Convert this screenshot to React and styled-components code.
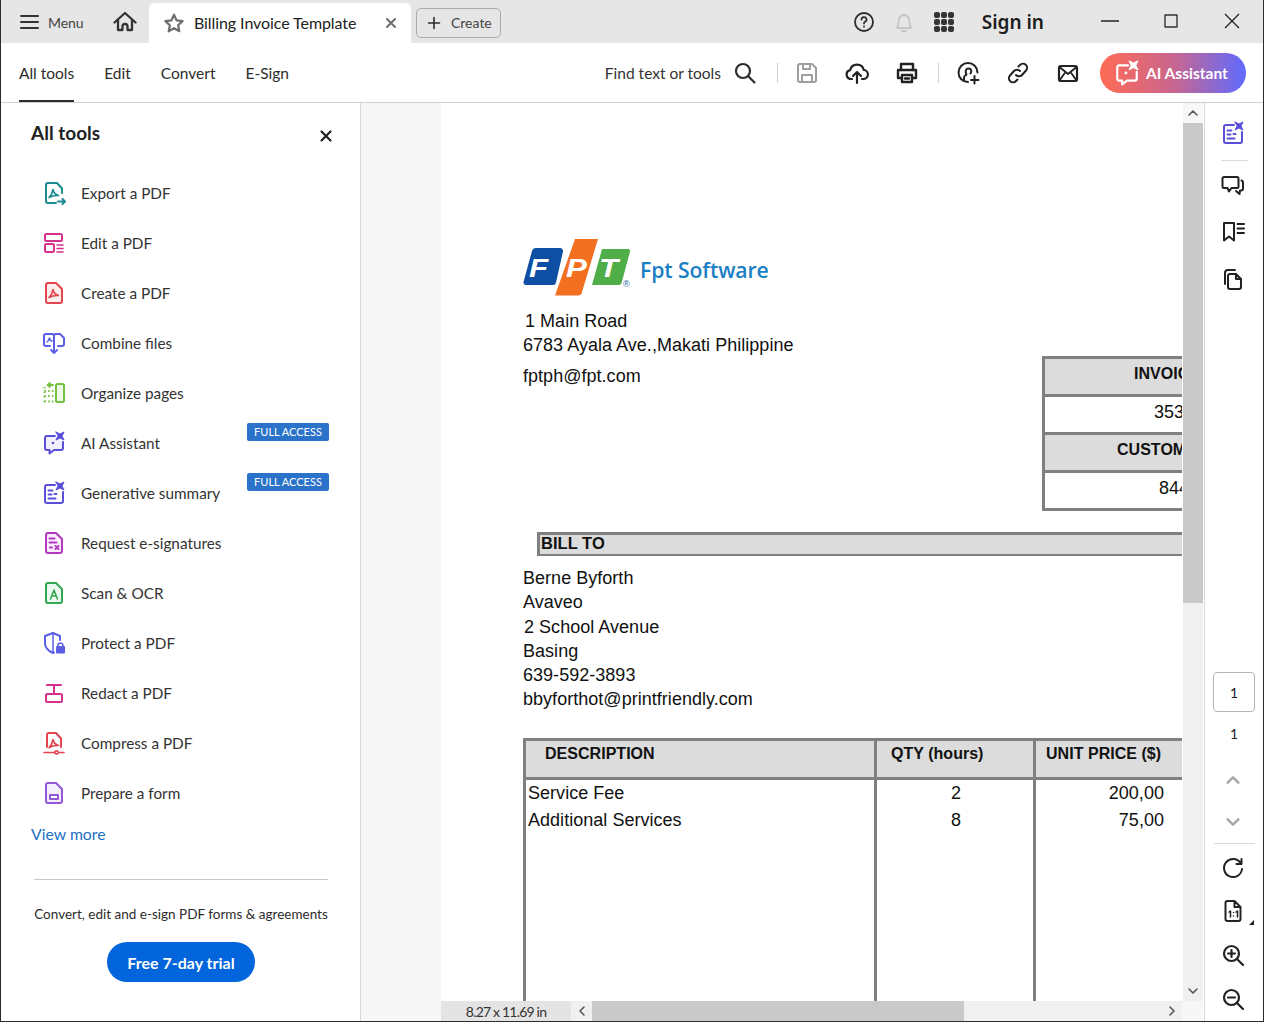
import React from 'react';
import styled, { createGlobalStyle } from 'styled-components';

const GlobalStyle = createGlobalStyle`
  html, body {
    margin: 0;
    padding: 0;
    background: #fff;
  }
  * {
    box-sizing: border-box;
  }
`;

const UI_FONT = `'Lato', 'Noto Sans', sans-serif`;
const DOC_FONT = `'Liberation Sans', Arial, sans-serif`;

const Window = styled.div`
  width: 1264px;
  height: 1022px;
  display: flex;
  flex-direction: column;
  overflow: hidden;
  border-left: 1px solid #2c2c2c;
  border-right: 1px solid #2c2c2c;
  border-bottom: 1px solid #2c2c2c;
  font-family: ${UI_FONT};
  color: #2c2c2c;
  background: #fff;
`;

const TitleBar = styled.div`
  height: 43px;
  flex: none;
  display: flex;
  align-items: flex-end;
  background: #e6e6e6;
`;

const MenuButton = styled.div`
  width: 112px;
  height: 43px;
  display: flex;
  align-items: center;
  gap: 8px;
  padding: 1px 0 0 19px;
  font-size: 14px;
  letter-spacing: -0.1px;
  color: #444;
`;

const HomeButton = styled.div`
  width: 36px;
  height: 43px;
  display: flex;
  align-items: center;
`;

const Tab = styled.div`
  width: 262px;
  height: 40px;
  display: flex;
  align-items: center;
  padding: 0 14px 0 14px;
  background: #fff;
  border-radius: 5px 5px 0 0;
  font-size: 16px;
  letter-spacing: -0.08px;
  color: #222;
`;

const TabTitle = styled.span`
  margin: -2px 0 0 9px;
  flex: 1;
  white-space: nowrap;
`;

const CreateButton = styled.div`
  width: 85px;
  height: 30px;
  margin: 0 0 5px 5px;
  display: flex;
  align-items: center;
  gap: 10px;
  padding: 0 0 1px 10px;
  border: 1px solid #ababab;
  border-radius: 5px;
  font-size: 14px;
  color: #444;
`;

const TitleActions = styled.div`
  margin-left: auto;
  height: 43px;
  display: flex;
  align-items: center;
  padding-right: 1px;
`;

const TitleIcon = styled.div`
  width: 40px;
  display: flex;
  justify-content: center;
`;

const SignIn = styled.div`
  margin: 0 35px 0 18px;
  padding-top: 1px;
  font-family: 'Noto Sans', sans-serif;
  font-size: 19px;
  font-weight: 600;
  color: #1c1c1c;
  white-space: nowrap;
`;

const WindowButton = styled.div`
  width: 61px;
  height: 30px;
  margin-bottom: 1px;
  display: flex;
  align-items: center;
  justify-content: center;
`;

const ToolBar = styled.div`
  height: 60px;
  flex: none;
  display: flex;
  align-items: center;
  border-bottom: 1px solid #d0d0d0;
  padding-left: 18px;
`;

const NavTab = styled.div`
  height: 59px;
  margin-right: 30px;
  display: flex;
  align-items: center;
  font-size: 15.5px;
  color: #2c2c2c;
  border-bottom: 2px solid ${p => (p.$active ? '#2c2c2c' : 'transparent')};
  padding-top: 2px;
`;

const ToolActions = styled.div`
  margin-left: auto;
  display: flex;
  align-items: center;
  padding-right: 17px;
`;

const FindLabel = styled.span`
  font-size: 15.5px;
  color: #333;
  margin-right: 12px;
`;

const ToolDivider = styled.div`
  width: 1px;
  height: 20px;
  margin: 0 ${p => p.$right || 17}px 0 ${p => p.$left || 18}px;
  background: #cfcfcf;
`;

const ToolIcon = styled.div`
  width: ${p => p.$width || 50}px;
  display: flex;
  justify-content: center;
`;

const AssistantButton = styled.div`
  width: 146px;
  height: 40px;
  margin-left: 7px;
  display: flex;
  align-items: center;
  gap: 6px;
  padding-left: 14px;
  border-radius: 20px;
  background: linear-gradient(90deg, #ff6b55 0%, #c9668e 50%, #5f6bff 100%);
  color: #fff;
  font-size: 15.5px;
  font-weight: 700;
  white-space: nowrap;
`;

const Body = styled.div`
  flex: 1;
  min-height: 0;
  display: flex;
`;

const Sidebar = styled.aside`
  width: 360px;
  flex: none;
  display: flex;
  flex-direction: column;
  border-right: 1px solid #d8d8d8;
`;

const SidebarHead = styled.div`
  height: 65px;
  display: flex;
  justify-content: space-between;
  padding: 18px 26px 0 30px;
  font-size: 19px;
  font-weight: 700;
  color: #222;
`;

const ToolList = styled.div`
  display: flex;
  flex-direction: column;
`;

const ToolRow = styled.div`
  height: 50px;
  display: flex;
  align-items: center;
  padding: 0 31px 0 41px;
  font-size: 15.3px;
  color: #333;
`;

const RowLabel = styled.span`
  margin-left: 15px;
  white-space: nowrap;
`;

const Badge = styled.span`
  margin: 5px 0 0 auto;
  align-self: flex-start;
  width: 82px;
  height: 18px;
  padding-bottom: 1px;
  display: flex;
  align-items: center;
  justify-content: center;
  border-radius: 2px;
  background: #2b73ca;
  color: #fff;
  font-size: 11px;
`;

const ViewMore = styled.a`
  margin: 6px 0 0 30px;
  font-size: 15.8px;
  color: #1b6ec2;
`;

const Promo = styled.div`
  margin: 36px 32px 0 33px;
  padding-top: 26px;
  display: flex;
  flex-direction: column;
  align-items: center;
  border-top: 1px solid #c8c8c8;
  font-size: 13.5px;
  color: #2c2c2c;
  white-space: nowrap;
`;

const TrialButton = styled.div`
  width: 148px;
  height: 40px;
  margin-top: 20px;
  display: flex;
  align-items: center;
  justify-content: center;
  border-radius: 20px;
  background: #0265dc;
  color: #fff;
  font-size: 16px;
  font-weight: 700;
`;

const Gutter = styled.div`
  width: 80px;
  flex: none;
  background: #f7f7f7;
`;

const Viewer = styled.div`
  width: 762px;
  flex: none;
  display: flex;
  flex-direction: column;
`;

const ViewerMain = styled.div`
  flex: 1;
  min-height: 0;
  display: flex;
`;

const Page = styled.div`
  width: 741px;
  flex: none;
  overflow: hidden;
  background: #fff;
  padding: 135px 0 0 82px;
  font-family: ${DOC_FONT};
  font-size: 18px;
  letter-spacing: 0.03px;
  color: #111;
`;

const PageInner = styled.div`
  width: 860px;
`;

const LogoRow = styled.div`
  height: 60px;
  display: flex;
  align-items: center;
  gap: 9px;
`;

const LogoName = styled.span`
  font-family: 'Open Sans', sans-serif;
  font-size: 21.2px;
  font-weight: 600;
  color: #1b7fc4;
  margin-top: 2px;
  letter-spacing: -0.1px;
`;

const HeadRow = styled.div`
  display: grid;
  grid-template-columns: 519px 1fr;
  margin-top: 11px;
`;

const Address = styled.div`
  line-height: 24px;
`;

const AddressLine = styled.div`
  padding-left: ${p => p.$indent || 0}px;
  margin-top: ${p => p.$gap || 0}px;
  white-space: nowrap;
`;

const InvoiceBox = styled.div`
  margin-top: 47px;
  width: 260px;
  height: 155px;
  border: 3px solid #808080;
  border-right: 0;
  display: flex;
  flex-direction: column;
`;

const InvoiceCell = styled.div`
  flex: 1;
  display: flex;
  align-items: center;
  padding: 0 0 5px ${p => p.$indent}px;
  font-weight: ${p => (p.$head ? 700 : 400)};
  font-size: ${p => (p.$head ? 16 : 18)}px;
  background: ${p => (p.$head ? '#dcdcdc' : '#fff')};
  border-bottom: ${p => (p.$last ? 0 : '3px solid #808080')};
  white-space: nowrap;
`;

const BillTo = styled.div`
  margin: 21px 0 0 14px;
  height: 24px;
  display: flex;
  align-items: center;
  padding: 0 0 2px 1px;
  border: 3px solid #808080;
  border-right: 0;
  border-bottom-width: 2px;
  background: #dcdcdc;
  font-size: 16.5px;
  font-weight: 700;
`;

const BillLines = styled.div`
  margin-top: 10px;
  line-height: 24.3px;
`;

const InvoiceTable = styled.div`
  margin-top: 26.6px;
  height: 400px;
  border: 3px solid #808080;
  border-right: 0;
  border-bottom: 0;
  display: grid;
  grid-template-columns: 351px 159px 1fr;
  grid-template-rows: 39px 1fr;
`;

const HeadCell = styled.div`
  background: #dcdcdc;
  border-bottom: 3px solid #808080;
  border-right: ${p => (p.$end ? 0 : '3px solid #808080')};
  padding: 3px 0 0 ${p => p.$indent}px;
  font-size: 16px;
  font-weight: 700;
  line-height: 20px;
  white-space: nowrap;
`;

const BodyCell = styled.div`
  margin-top: 0;
  border-right: ${p => (p.$end ? 0 : '3px solid #808080')};
  padding: ${p => (p.$end ? '0' : '0 0 0 2px')};
  width: ${p => (p.$end ? '128px' : 'auto')};
  text-align: ${p => p.$align || 'left'};
  line-height: 27px;
  white-space: nowrap;
`;

const VScroll = styled.div`
  width: 20px;
  flex: none;
  margin-left: 1px;
  display: flex;
  flex-direction: column;
  background: #f0f0f0;
`;

const ScrollEnd = styled.div`
  height: ${p => p.$size || 20}px;
  flex: none;
  display: flex;
  align-items: center;
  justify-content: center;
  background: ${p => p.$bg || 'transparent'};
  margin-top: ${p => (p.$bottom ? 'auto' : 0)};
`;

const VThumb = styled.div`
  height: 480px;
  background: #c9c9c9;
`;

const HBar = styled.div`
  height: 20px;
  flex: none;
  display: flex;
  background: #f0f0f0;
`;

const PageSize = styled.div`
  width: 130px;
  display: flex;
  align-items: center;
  justify-content: center;
  background: #e4e4e4;
  font-size: 14px;
  letter-spacing: -0.8px;
  color: #333;
`;

const HArrow = styled.div`
  width: 21px;
  display: flex;
  align-items: center;
  justify-content: center;
`;

const HThumb = styled.div`
  width: 372px;
  background: #c9c9c9;
`;

const HTrack = styled.div`
  flex: 1;
`;

const Corner = styled.div`
  width: 21px;
  background: #f7f7f7;
`;

const Rail = styled.div`
  flex: 1;
  display: flex;
  flex-direction: column;
  align-items: center;
  justify-content: space-between;
  border-left: 1px solid #d8d8d8;
  margin-left: 1px;
  padding-top: 18px;
`;

const RailGroup = styled.div`
  display: flex;
  flex-direction: column;
  align-items: center;
`;

const RailItem = styled.div`
  position: relative;
  height: ${p => p.$height || 47}px;
  display: flex;
  align-items: center;
  justify-content: center;
  padding-right: ${p => (p.$text ? 0 : 2)}px;
  font-size: 14px;
  color: #222;
`;

const CornerMark = styled.span`
  position: absolute;
  right: -7px;
  bottom: 8px;
  border-left: 5px solid transparent;
  border-bottom: 5px solid #222;
`;

const RailRule = styled.div`
  width: ${p => p.$width}px;
  height: 1px;
  margin: ${p => p.$margin};
  background: #dcdcdc;
`;

const PageBox = styled.div`
  width: 42px;
  height: 40px;
  display: flex;
  align-items: center;
  justify-content: center;
  border: 1px solid #b5b5b5;
  border-radius: 4px;
  font-size: 14px;
  color: #222;
`;

const Glyph = styled.svg.attrs(p => ({
  viewBox: `0 0 ${p.$box || 24} ${p.$box || 24}`,
}))`
  display: block;
  flex: none;
  width: ${p => p.$size || 24}px;
  height: ${p => p.$size || 24}px;
  fill: none;
  stroke: ${p => p.$color || '#2c2c2c'};
  stroke-width: ${p => p.$weight || 2};
  stroke-linecap: round;
  stroke-linejoin: round;
`;

const CloseGlyph = styled(Glyph)`
  margin-top: 7px;
`;

// stylised acrobat mark, used inside the pdf document icons
const PdfMark = ({ color }) => (
  <path
    d="M7 16.5c2-1.8 3.4-4.4 4-8 .5 3 2.2 5 5.5 6-3.4-.3-6.5.3-9.5 2z"
    stroke={color}
    strokeWidth="1.6"
  />
);

const SPARKLE = 'M14 1l4 2 4-2-2 4 2 4-4-2-4 2 2-4z';

const ExportIcon = () => (
  <Glyph $color="#1b8a90">
    <path d="M20 12V7.5L15 2H6a2 2 0 0 0-2 2v16a2 2 0 0 0 2 2h8" />
    <PdfMark color="#1b8a90" />
    <path d="M16 20.5h7M20.5 18l2.5 2.5-2.5 2.5" />
  </Glyph>
);

const EditIcon = () => (
  <Glyph $color="#d5308c">
    <rect x="3" y="3" width="17" height="7" rx="1.5" />
    <rect x="3" y="13" width="9" height="8" rx="1.5" />
    <path d="M15 14h6M15 17.5h6M15 21h6" strokeWidth="1.6" />
  </Glyph>
);

const CreateIcon = () => (
  <Glyph $color="#e2454f">
    <path d="M20 8v12a2 2 0 0 1-2 2H6a2 2 0 0 1-2-2V4a2 2 0 0 1 2-2h8z" fill="#fdeeee" />
    <PdfMark color="#e2454f" />
  </Glyph>
);

const CombineIcon = () => (
  <Glyph $color="#5a5fe6">
    <path d="M8 15H4a2 2 0 0 1-2-2V5a2 2 0 0 1 2-2h6a2 2 0 0 1 2 2 2 2 0 0 1 2-2h4l4 4v6a2 2 0 0 1-2 2h-4" />
    <path d="M5 11c1.5-1 2-2 2.4-4 .3 1.5 1 2.600 2.600 3" strokeWidth="1.4" />
    <path d="M12 5v17M9 19l3 3 3-3" />
  </Glyph>
);

const OrganizeIcon = () => (
  <Glyph $color="#74c13f">
    <rect x="14" y="3" width="8" height="18" rx="1.5" fill="#eef8e6" />
    <path d="M11 4H5.5M5.500 4l2.500-2M5.500 4l2.500 2" strokeWidth="1.8" />
    <path d="M2.5 10h9M2.5 15h9M2.5 20.5h9" strokeDasharray="1.5 2.2" strokeLinecap="butt" />
    <path d="M2.5 6v15" strokeDasharray="1.5 3" strokeLinecap="butt" />
  </Glyph>
);

const SparkleBubble = ({ color, fill, size }) => (
  <Glyph $color={color} $size={size}>
    <path d="M13 5H5a2 2 0 0 0-2 2v10a2 2 0 0 0 2 2h2.5v3.5L12 19h7a2 2 0 0 0 2-2v-6" fill={fill} />
    <circle cx="11" cy="12" r="1.3" fill={color} stroke="none" />
    <path d={SPARKLE} fill={color} strokeWidth="1" />
  </Glyph>
);

const SummaryIcon = () => (
  <Glyph $color="#5a4fd8">
    <path d="M13 4H5a2 2 0 0 0-2 2v14a2 2 0 0 0 2 2h14a2 2 0 0 0 2-2v-9" />
    <path d="M6.5 9.5h4M6.5 13.5h3M6.5 17.5h7M12.5 13h2" />
    <path d={SPARKLE} fill="#5a4fd8" strokeWidth="1" />
  </Glyph>
);

const SignatureIcon = () => (
  <Glyph $color="#b338c0">
    <path d="M20 8v12a2 2 0 0 1-2 2H6a2 2 0 0 1-2-2V4a2 2 0 0 1 2-2h8z" fill="#fbeefc" />
    <path d="M7.5 7.5h5M7.5 11.5h7M8 16.5h2M13.5 15l3 3M16.5 15l-3 3" />
  </Glyph>
);

const ScanIcon = () => (
  <Glyph $color="#2fa84f">
    <path d="M20 8v12a2 2 0 0 1-2 2H6a2 2 0 0 1-2-2V4a2 2 0 0 1 2-2h8z" fill="#edf8ef" />
    <path d="M8.5 18l3.5-9 3.5 9M10 15h4" strokeWidth="1.5" />
  </Glyph>
);

const ProtectIcon = () => (
  <Glyph $color="#5a5fe6">
    <path d="M11 2L3 5v7c0 4.5 3.3 8 8 10 .8-.3 1-.5 1-.5" />
    <path d="M11 2v19" strokeWidth="1.5" />
    <path d="M11 2l7 3v4" />
    <rect x="14" y="15" width="9" height="7.5" rx="1" fill="#5a5fe6" stroke="none" />
    <path d="M16 15.5v-1a2.5 2.5 0 0 1 5 0v1" strokeWidth="1.6" />
  </Glyph>
);

const RedactIcon = () => (
  <Glyph $color="#d5308c">
    <rect x="4" y="13" width="16" height="8" rx="1.5" />
    <path d="M5 4h14M12 4v8" />
  </Glyph>
);

const CompressIcon = () => (
  <Glyph $color="#e2454f">
    <path d="M19 16V7.5L14 2H7a2 2 0 0 0-2 2v12" />
    <PdfMark color="#e2454f" />
    <path d="M2 21.5h20" strokeWidth="1.6" />
    <circle cx="14.5" cy="21.5" r="1.6" fill="#fff" strokeWidth="1.6" />
  </Glyph>
);

const FormIcon = () => (
  <Glyph $color="#9256d9">
    <path d="M20 8v12a2 2 0 0 1-2 2H6a2 2 0 0 1-2-2V4a2 2 0 0 1 2-2h8z" fill="#f5effc" />
    <rect x="8" y="14" width="8" height="4" fill="#fff" />
  </Glyph>
);

const FptLogo = () => (
  <svg width="108" height="60" viewBox="0 0 108 60">
    <path d="M13 10h24a3 3 0 0 1 3 3.5l-7 31a3 3 0 0 1-3 2.5H3a2.5 2.5 0 0 1-2.5-3l8.5-31c.5-2 2-3 4-3z" fill="#0f4fa3" />
    <path d="M52 1h23l-16 53a4 4 0 0 1-4 3.5H32z" fill="#f37021" />
    <path d="M79 11h26a2 2 0 0 1 2 2.5l-8 30a4 4 0 0 1-4 3.5H69z" fill="#4fae48" />
    <g fontFamily="'Liberation Sans', sans-serif" fontWeight="700" fontStyle="italic" fontSize="25" fill="#fff">
      <text transform="translate(6 39) scale(1.25 1)">F</text>
      <text transform="translate(43 39) scale(1.25 1)">P</text>
      <text transform="translate(76 39) scale(1.25 1)">T</text>
    </g>
    <text x="100" y="49" fontFamily="'Liberation Sans', sans-serif" fontSize="9" fill="#1b5fa5">®</text>
  </svg>
);

const tools = [
  { name: 'Export a PDF', Icon: ExportIcon },
  { name: 'Edit a PDF', Icon: EditIcon },
  { name: 'Create a PDF', Icon: CreateIcon },
  { name: 'Combine files', Icon: CombineIcon },
  { name: 'Organize pages', Icon: OrganizeIcon },
  { name: 'AI Assistant', Icon: () => <SparkleBubble color="#5a4fd8" fill="#f1effc" />, badge: true },
  { name: 'Generative summary', Icon: SummaryIcon, badge: true },
  { name: 'Request e-signatures', Icon: SignatureIcon },
  { name: 'Scan & OCR', Icon: ScanIcon },
  { name: 'Protect a PDF', Icon: ProtectIcon },
  { name: 'Redact a PDF', Icon: RedactIcon },
  { name: 'Compress a PDF', Icon: CompressIcon },
  { name: 'Prepare a form', Icon: FormIcon },
];

const Chevron = ({ dir, color = '#555', size = 12, weight = 1.6 }) => {
  const paths = {
    up: 'M2 8l4-4 4 4',
    down: 'M2 4l4 4 4-4',
    left: 'M8 2L4 6l4 4',
    right: 'M4 2l4 4-4 4',
  };
  return (
    <Glyph $box={12} $size={size} $color={color} $weight={weight}>
      <path d={paths[dir]} />
    </Glyph>
  );
};

function App() {
  return (
    <Window>
      <GlobalStyle />
      <TitleBar>
        <MenuButton>
          <Glyph $size={20} $box={20} $color="#333">
            <path d="M1 4h17M1 10h17M1 16h17" />
          </Glyph>
          Menu
        </MenuButton>
        <HomeButton>
          <Glyph $color="#333" $weight={2.3}>
            <path d="M1.5 12.5L12 3l10.5 9.5" />
            <path d="M5 10v10h4.5v-3.5a2.5 2.5 0 0 1 5 0V20H19V10" />
          </Glyph>
        </HomeButton>
        <Tab>
          <Glyph $color="#6e6e6e" $weight={2.4} $size={22}>
            <path d="M12 3l2.8 6.100 6.600.8-4.900 4.500 1.300 6.600L12 17.700 6.200 21l1.300-6.600L2.600 9.900l6.600-.8z" />
          </Glyph>
          <TabTitle>Billing Invoice Template</TabTitle>
          <Glyph $box={12} $size={12} $color="#6e6e6e" $weight={2}>
            <path d="M2 2l8 8M10 2l-8 8" />
          </Glyph>
        </Tab>
        <CreateButton>
          <Glyph $box={14} $size={14} $color="#2c2c2c" $weight={1.6}>
            <path d="M7 1.5v11M1.5 7h11" />
          </Glyph>
          Create
        </CreateButton>
        <TitleActions>
          <TitleIcon>
            <Glyph $color="#2c2c2c" $weight={1.8}>
              <circle cx="12" cy="12" r="9" />
              <path d="M9.5 9.5a2.5 2.5 0 1 1 3.6 2.3c-.8.4-1.100 1-1.100 1.700M12 16.500v.2" />
            </Glyph>
          </TitleIcon>
          <TitleIcon>
            <Glyph $color="#c4c4c4" $weight={1.8}>
              <path d="M5 18c1.5-1.5 1.5-3 1.5-6 0-4 2-7 5.5-7s5.500 3 5.500 7c0 3 0 4.500 1.500 6zM10 21h4" />
            </Glyph>
          </TitleIcon>
          <TitleIcon>
            <Glyph $box={20} $size={20} $color="#333" $weight={0}>
              {[1, 8, 15].map(y =>
                [1, 8, 15].map(x => <rect key={`${x}-${y}`} x={x} y={y} width="4" height="4" rx="1" fill="#333" />)
              )}
            </Glyph>
          </TitleIcon>
          <SignIn>Sign in</SignIn>
          <WindowButton>
            <Glyph $box={20} $size={20} $weight={1.5} $color="#222">
              <path d="M1 10h18" strokeLinecap="butt" />
            </Glyph>
          </WindowButton>
          <WindowButton>
            <Glyph $box={14} $size={14} $weight={1.4} $color="#333">
              <rect x="1" y="1" width="12" height="12" />
            </Glyph>
          </WindowButton>
          <WindowButton>
            <Glyph $box={16} $size={16} $weight={1.3} $color="#222">
              <path d="M1 1l14 14M15 1L1 15" strokeLinecap="butt" />
            </Glyph>
          </WindowButton>
        </TitleActions>
      </TitleBar>

      <ToolBar>
        <NavTab $active>All tools</NavTab>
        <NavTab>Edit</NavTab>
        <NavTab>Convert</NavTab>
        <NavTab>E-Sign</NavTab>
        <ToolActions>
          <FindLabel>Find text or tools</FindLabel>
          <Glyph $color="#2c2c2c" $weight={2.2}>
            <circle cx="10" cy="10" r="7" />
            <path d="M15 15l6.500 6.500" />
          </Glyph>
          <ToolDivider $left={20} $right={4} />
          <ToolIcon>
            <Glyph $color="#9e9e9e" $weight={2}>
              <path d="M3 5a2 2 0 0 1 2-2h12l4 4v12a2 2 0 0 1-2 2H5a2 2 0 0 1-2-2z" />
              <path d="M8 3v5h7V3M7 21v-7h10v7" />
            </Glyph>
          </ToolIcon>
          <ToolIcon>
            <Glyph $color="#222" $weight={2.2}>
              <path d="M7 18H6a4.5 4.5 0 0 1-.8-8.900A7 7 0 0 1 18.800 9 4.500 4.500 0 0 1 18 18h-1" />
              <path d="M12 22V11M8 15l4-4 4 4" />
            </Glyph>
          </ToolIcon>
          <ToolIcon>
            <Glyph $color="#222" $weight={2.4}>
              <path d="M6 9V3h12v6" />
              <path d="M6 17H3V9h18v8h-3" />
              <path d="M7 14h10v7H7zM10 17.5h4" />
            </Glyph>
          </ToolIcon>
          <ToolDivider $left={6} $right={4} />
          <ToolIcon>
            <Glyph $color="#222" $weight={2}>
              <path d="M12 21a9.5 9.5 0 1 1 9.5-9.5" />
              <path d="M8 18.5v-2c0-1.5 1.5-2 2.5-3-1.5-2-1-6 2-6s3.500 3 2 5" />
              <path d="M18.5 15v7.5M15 19h7.5" />
            </Glyph>
          </ToolIcon>
          <ToolIcon>
            <Glyph $color="#222" $weight={2}>
              <path d="M10 14a4 4 0 0 0 6 0l4-4.5a4 4 0 0 0-6-5.500l-1.500 1.500" />
              <path d="M14 10a4 4 0 0 0-6 0l-4 4.5a4 4 0 0 0 6 5.500l1.500-1.500" />
            </Glyph>
          </ToolIcon>
          <ToolIcon>
            <Glyph $color="#222" $weight={2.2}>
              <rect x="3" y="5" width="18" height="15" rx="2" />
              <path d="M3.5 6L12 13l8.500-7M3.500 19.500l6-8.500M20.500 19.500l-6-8.500" strokeWidth="1.8" />
            </Glyph>
          </ToolIcon>
          <AssistantButton>
            <SparkleBubble color="#fff" size={26} />
            AI Assistant
          </AssistantButton>
        </ToolActions>
      </ToolBar>

      <Body>
        <Sidebar>
          <SidebarHead>
            All tools
            <CloseGlyph $box={16} $size={16} $color="#222" $weight={2.2}>
              <path d="M3.5 3.5l9 9M12.5 3.5l-9 9" />
            </CloseGlyph>
          </SidebarHead>
          <ToolList>
            {tools.map(({ name, Icon, badge }) => (
              <ToolRow key={name}>
                <Icon />
                <RowLabel>{name}</RowLabel>
                {badge && <Badge>FULL ACCESS</Badge>}
              </ToolRow>
            ))}
          </ToolList>
          <ViewMore>View more</ViewMore>
          <Promo>
            Convert, edit and e-sign PDF forms &amp; agreements
            <TrialButton>Free 7-day trial</TrialButton>
          </Promo>
        </Sidebar>

        <Gutter />

        <Viewer>
          <ViewerMain>
            <Page>
              <PageInner>
                <LogoRow>
                  <FptLogo />
                  <LogoName>Fpt Software</LogoName>
                </LogoRow>
                <HeadRow>
                  <Address>
                    <AddressLine $indent={2}>1 Main Road</AddressLine>
                    <AddressLine>6783 Ayala Ave.,Makati Philippine</AddressLine>
                    <AddressLine $gap={7}>fptph@fpt.com</AddressLine>
                  </Address>
                  <InvoiceBox>
                    <InvoiceCell $head $indent={89}>INVOICE #</InvoiceCell>
                    <InvoiceCell $indent={109}>35346</InvoiceCell>
                    <InvoiceCell $head $indent={72}>CUSTOMER ID</InvoiceCell>
                    <InvoiceCell $last $indent={114}>84477</InvoiceCell>
                  </InvoiceBox>
                </HeadRow>
                <BillTo>BILL TO</BillTo>
                <BillLines>
                  <AddressLine>Berne Byforth</AddressLine>
                  <AddressLine>Avaveo</AddressLine>
                  <AddressLine $indent={1}>2 School Avenue</AddressLine>
                  <AddressLine>Basing</AddressLine>
                  <AddressLine>639-592-3893</AddressLine>
                  <AddressLine>bbyforthot@printfriendly.com</AddressLine>
                </BillLines>
                <InvoiceTable>
                  <HeadCell $indent={19}>DESCRIPTION</HeadCell>
                  <HeadCell $indent={14}>QTY (hours)</HeadCell>
                  <HeadCell $end $indent={10}>UNIT PRICE ($)</HeadCell>
                  <BodyCell>
                    <div>Service Fee</div>
                    <div>Additional Services</div>
                  </BodyCell>
                  <BodyCell $align="center">
                    <div>2</div>
                    <div>8</div>
                  </BodyCell>
                  <BodyCell $end $align="right">
                    <div>200,00</div>
                    <div>75,00</div>
                  </BodyCell>
                </InvoiceTable>
              </PageInner>
            </Page>
            <VScroll>
              <ScrollEnd $bg="#f7f7f7"><Chevron dir="up" /></ScrollEnd>
              <VThumb />
              <ScrollEnd $bottom><Chevron dir="down" /></ScrollEnd>
            </VScroll>
          </ViewerMain>
          <HBar>
            <PageSize>8.27 x 11.69 in</PageSize>
            <HArrow><Chevron dir="left" /></HArrow>
            <HThumb />
            <HTrack />
            <HArrow><Chevron dir="right" /></HArrow>
            <Corner />
          </HBar>
        </Viewer>

        <Rail>
          <RailGroup>
            <RailItem $height={24}><SummaryIcon /></RailItem>
            <RailRule $width={27} $margin="15px 0 0" />
            <RailItem>
              <Glyph $color="#222" $weight={2}>
                <path d="M3 4h13a1.5 1.5 0 0 1 1.5 1.5v8a1.5 1.5 0 0 1-1.5 1.5h-5.5L8 18.5 6.5 15H3a1.5 1.5 0 0 1-1.5-1.5v-8A1.5 1.5 0 0 1 3 4z" />
                <path d="M20.5 7.5c1 .3 1.5 1 1.5 2v6c0 1-.6 2-2 2h-1l-.5 3.5-3.500-3" />
              </Glyph>
            </RailItem>
            <RailItem><Glyph $color="#222" $weight={2}>
              <path d="M3 3h10v17.5l-5-4-5 4zM16.5 4H23M16.5 8.5H23M16.5 13H23" />
            </Glyph></RailItem>
            <RailItem $height={48}><Glyph $color="#222" $weight={2}>
              <path d="M9 7h6l5 5v8a2 2 0 0 1-2 2H9a2 2 0 0 1-2-2V9a2 2 0 0 1 2-2zM15 7v5h5" />
              <path d="M4 17V6a3 3 0 0 1 3-3h7" />
            </Glyph></RailItem>
          </RailGroup>
          <RailGroup>
            <PageBox>1</PageBox>
            <RailItem $text $height={43}>1</RailItem>
            <RailItem $height={49}><Chevron dir="up" color="#a8a8a8" size={16} weight={2} /></RailItem>
            <RailItem $height={35}><Chevron dir="down" color="#a8a8a8" size={16} weight={2} /></RailItem>
            <RailRule $width={41} $margin="4px 0 3px" />
            <RailItem $height={42}><Glyph $color="#222" $weight={2}>
              <path d="M19.5 7A9 9 0 1 0 21 13M20.5 3v5h-5" />
            </Glyph></RailItem>
            <RailItem $height={44}>
              <Glyph $color="#222" $weight={2}>
                <path d="M19.5 8v12a2 2 0 0 1-2 2h-11a2 2 0 0 1-2-2V4a2 2 0 0 1 2-2h7zM13.5 2v6h6" />
                <path d="M8 13l1.5-1v6M15 13l1.5-1v6M12.5 13.5v.1M12.5 17v.1" strokeWidth="1.5" />
              </Glyph>
              <CornerMark />
            </RailItem>
            <RailItem $height={44}><Glyph $color="#222" $weight={2.2}>
              <circle cx="10.5" cy="10.5" r="7.5" />
              <path d="M16 16l6 6M7 10.5h7M10.5 7v7" />
            </Glyph></RailItem>
            <RailItem $height={44}><Glyph $color="#222" $weight={2.2}>
              <circle cx="10.5" cy="10.5" r="7.5" />
              <path d="M16 16l6 6M7 10.5h7" />
            </Glyph></RailItem>
          </RailGroup>
        </Rail>
      </Body>
    </Window>
  );
}

export default App;
